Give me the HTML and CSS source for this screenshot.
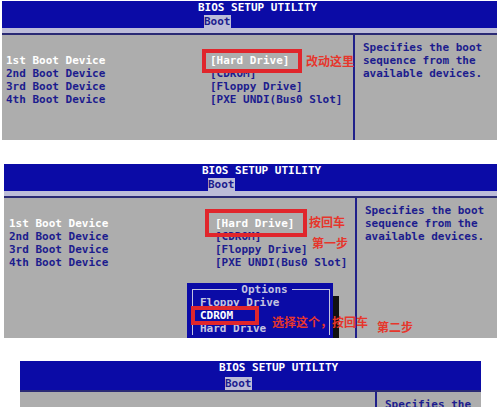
FILE: index.html
```html
<!DOCTYPE html>
<html lang="zh-CN">
<head>
  <meta charset="UTF-8" />
  <meta name="viewport" content="width=device-width, initial-scale=1.0"/>
  <title>BIOS 启动顺序设置</title>
  <link rel="stylesheet" href="styles.css">
</head>
<body>

  <!-- 第一张：改动启动设备 -->
  <div class="shot shot-1">
    <div class="bar">
      <div class="title">BIOS SETUP UTILITY</div>
      <div class="tabs"><span class="tab">Boot</span></div>
    </div>
    <div class="rule"></div>
    <div class="body">
      <div class="list">
        <div class="row current"><span>1st Boot Device</span><span><span class="mark">[Hard Drive]</span></span></div>
        <div class="row"><span>2nd Boot Device</span><span>[CDROM]</span></div>
        <div class="row"><span>3rd Boot Device</span><span>[Floppy Drive]</span></div>
        <div class="row"><span>4th Boot Device</span><span>[PXE UNDI(Bus0 Slot]</span></div>
      </div>
      <div class="help">Specifies the boot<br>sequence from the<br>available devices.</div>
    </div>
    <span class="note note-a">改动这里</span>
  </div>

  <!-- 第二张：选择光驱 -->
  <div class="shot shot-2">
    <div class="bar">
      <div class="title">BIOS SETUP UTILITY</div>
      <div class="tabs"><span class="tab">Boot</span></div>
    </div>
    <div class="rule"></div>
    <div class="body">
      <div class="list">
        <div class="row current"><span>1st Boot Device</span><span><span class="mark">[Hard Drive]</span></span></div>
        <div class="row"><span>2nd Boot Device</span><span>[CDROM]</span></div>
        <div class="row"><span>3rd Boot Device</span><span>[Floppy Drive]</span></div>
        <div class="row"><span>4th Boot Device</span><span>[PXE UNDI(Bus0 Slot]</span></div>
      </div>
      <div class="help">Specifies the boot<br>sequence from the<br>available devices.</div>
    </div>

    <div class="popup">
      <fieldset class="frame">
        <legend>Options</legend>
        <div class="opt">Floppy Drive</div>
        <div class="opt picked"><span class="mark">CDROM</span></div>
        <div class="opt">Hard Drive</div>
      </fieldset>
    </div>

    <span class="note note-b">按回车</span>
    <span class="note note-c">第一步</span>
    <span class="note note-d">选择这个，按回车</span>
    <span class="note note-e">第二步</span>
  </div>

  <!-- 第三张：只露出顶部 -->
  <div class="shot shot-3">
    <div class="bar">
      <div class="title">BIOS SETUP UTILITY</div>
      <div class="tabs"><span class="tab">Boot</span></div>
    </div>
    <div class="rule"></div>
    <div class="body">
      <div class="list"></div>
      <div class="help">Specifies the boot</div>
    </div>
  </div>

</body>
</html>
```

FILE: styles.css
```css
body {
  margin: 0;
  width: 500px;
  height: 407px;
  overflow: hidden;
  background: #fff;
  font-family: "DejaVu Sans Mono", "Liberation Mono", monospace;
  font-size: 11px;
  line-height: 13px;
  font-weight: bold;
}

.shot {
  position: relative;
  display: flex;
  flex-direction: column;
  background: #adadad;
  overflow: hidden;
}

.shot-1 {
  margin: 1px 0 0 2px;
  width: 495px;
  height: 139px;
}

.shot-2 {
  margin: 24px 0 0 4px;
  width: 493px;
  height: 174px;
}

.shot-3 {
  margin: 23px 0 0 20px;
  width: 461px;
  height: 60px;
}

.bar {
  height: 27px;
  padding-left: 196px;
  background: #0b0ba6;
  color: #fff;
}

.shot-2 .bar {
  padding-left: 198px;
}

.shot-3 .bar {
  height: 29px;
  padding-left: 199px;
}

.title {
  height: 14px;
  line-height: 14px;
}

.tabs {
  height: 13px;
}

.shot-3 .tabs {
  margin-top: 2px;
}

.tab {
  display: inline-block;
  height: 13px;
  margin-left: 6px;
  background: #bcbcd8;
  color: #1c1c8e;
}

.rule {
  height: 5px;
  background: #bcbcd8;
  border-bottom: 2px solid #2a2a74;
}

.body {
  flex: 1;
  display: grid;
  grid-template-columns: 351px 1fr;
  color: #1c1c8e;
}

.shot-3 .body {
  grid-template-columns: 355px 1fr;
}

.list {
  padding: 19px 0 0 4px;
}

.shot-2 .list {
  padding-left: 5px;
}

.row {
  display: grid;
  grid-template-columns: 204px auto;
  white-space: pre;
}

.shot-2 .row {
  grid-template-columns: 206px auto;
}

.row.current {
  color: #fff;
}

.help {
  border-left: 2px solid #20208a;
  padding: 6px 0 0 8px;
}

.mark {
  position: relative;
}

.mark::after {
  content: "";
  position: absolute;
  left: -8px;
  right: -13px;
  top: -5px;
  bottom: -6px;
  border: 4px solid #e0262c;
}

.shot-2 .row .mark::after {
  left: -10px;
  right: -13px;
  top: -8px;
  bottom: -7px;
}

/* 选项弹窗 */
.popup {
  position: absolute;
  left: 183px;
  top: 119px;
  width: 146px;
  height: 70px;
  background: #0b0ba6;
  box-shadow: 6px 13px 0 #111;
  color: #c4c4e0;
}

.frame {
  margin: 0 3px 0 5px;
  padding: 0 0 0 7px;
  border: 1px solid #c4c4e0;
  border-bottom: none;
  min-width: 0;
}

.frame legend {
  margin: 0 auto;
  padding: 0 4px;
  line-height: 13px;
}

.opt {
  line-height: 13px;
}

.opt.picked {
  color: #fff;
}

.opt.picked .mark::after {
  left: -9px;
  right: -26px;
  top: -3px;
  bottom: -3px;
}

/* 红色标注 */
.note {
  position: absolute;
  color: #e6362c;
  font-family: "Noto Sans CJK SC", sans-serif;
  font-size: 12px;
  line-height: 12px;
  font-weight: bold;
  white-space: nowrap;
}

.note-a { left: 304px; top: 54px; }
.note-b { left: 305px; top: 52px; }
.note-c { left: 308px; top: 73px; }
.note-d { left: 268px; top: 152px; }
.note-e { left: 373px; top: 157px; }
```
